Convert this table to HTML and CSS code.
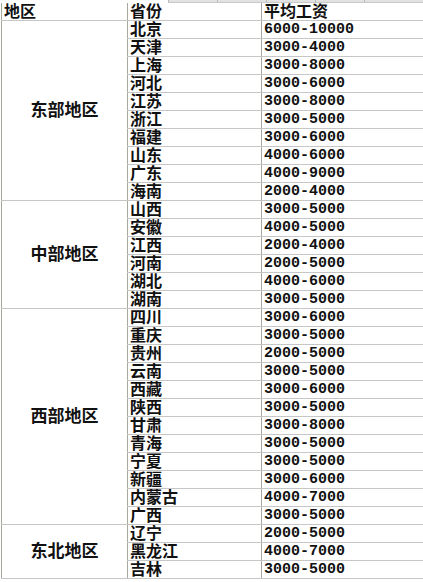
FILE: index.html
```html
<!DOCTYPE html>
<html lang="zh-CN">
<head>
<meta charset="utf-8">
<title>地区平均工资</title>
<link rel="stylesheet" href="styles.css">
</head>
<body>
<div class="sheet">
  <div class="strip"><span></span><span></span><span></span><span></span><span></span></div>
  <table class="grid">
    <colgroup><col class="c1"><col class="c2"><col class="c3"></colgroup>
    <thead>
      <tr><th>地区</th><th>省份</th><th>平均工资</th></tr>
    </thead>
    <tbody>
      <tr><td class="region" rowspan="10">东部地区</td><td>北京</td><td class="num">6000-10000</td></tr>
      <tr><td>天津</td><td class="num">3000-4000</td></tr>
      <tr><td>上海</td><td class="num">3000-8000</td></tr>
      <tr><td>河北</td><td class="num">3000-6000</td></tr>
      <tr><td>江苏</td><td class="num">3000-8000</td></tr>
      <tr><td>浙江</td><td class="num">3000-5000</td></tr>
      <tr><td>福建</td><td class="num">3000-6000</td></tr>
      <tr><td>山东</td><td class="num">4000-6000</td></tr>
      <tr><td>广东</td><td class="num">4000-9000</td></tr>
      <tr><td>海南</td><td class="num">2000-4000</td></tr>
      <tr><td class="region" rowspan="6">中部地区</td><td>山西</td><td class="num">3000-5000</td></tr>
      <tr><td>安徽</td><td class="num">4000-5000</td></tr>
      <tr><td>江西</td><td class="num">2000-4000</td></tr>
      <tr><td>河南</td><td class="num">2000-5000</td></tr>
      <tr><td>湖北</td><td class="num">4000-6000</td></tr>
      <tr><td>湖南</td><td class="num">3000-5000</td></tr>
      <tr><td class="region" rowspan="12">西部地区</td><td>四川</td><td class="num">3000-6000</td></tr>
      <tr><td>重庆</td><td class="num">3000-5000</td></tr>
      <tr><td>贵州</td><td class="num">2000-5000</td></tr>
      <tr><td>云南</td><td class="num">3000-5000</td></tr>
      <tr><td>西藏</td><td class="num">3000-6000</td></tr>
      <tr><td>陕西</td><td class="num">3000-5000</td></tr>
      <tr><td>甘肃</td><td class="num">3000-8000</td></tr>
      <tr><td>青海</td><td class="num">3000-5000</td></tr>
      <tr><td>宁夏</td><td class="num">3000-5000</td></tr>
      <tr><td>新疆</td><td class="num">3000-6000</td></tr>
      <tr><td>内蒙古</td><td class="num">4000-7000</td></tr>
      <tr><td>广西</td><td class="num">3000-5000</td></tr>
      <tr><td class="region" rowspan="3">东北地区</td><td>辽宁</td><td class="num">2000-5000</td></tr>
      <tr><td>黑龙江</td><td class="num">4000-7000</td></tr>
      <tr><td>吉林</td><td class="num">3000-5000</td></tr>
    </tbody>
  </table>
</div>
</body>
</html>
```
FILE: styles.css
```css
html, body {
  margin: 0;
  padding: 0;
  background: #ffffff;
  overflow: hidden;
}
.sheet {
  width: 423px;
  overflow: hidden;
  padding-left: 1px;
}
.strip {
  margin-left: 167px;
  height: 2px;
  background: #e2e2e2;
  border-bottom: 1px solid #c8c8c8;
  display: flex;
}
.strip span {
  width: 0;
  border-left: 1px solid #b8b8b8;
  margin-right: 48px;
}
.grid {
  border-collapse: collapse;
  table-layout: fixed;
  width: 520px;
  font-family: "Liberation Sans", "Noto Sans CJK SC", "Noto Sans CJK TC", sans-serif;
  font-weight: 700;
  font-size: 16px;
  color: #111111;
}
.c1 { width: 126px; }
.c2 { width: 134px; }
.c3 { width: 260px; }
.grid th, .grid td {
  height: 17px;
  padding: 0 0 0 2px;
  line-height: 17px;
  text-align: left;
  vertical-align: bottom;
  border-top: 1px solid #c6c6c6;
  border-bottom: 1px solid #c6c6c6;
  border-left: 1px solid #a8a8a0;
  white-space: nowrap;
}
.grid thead th {
  border-top: none;
  font-weight: 700;
}
.grid tr:first-child th:first-child,
.grid td.region {
  border-left: 1px solid #a3a998;
}
.grid td.region {
  text-align: center;
  vertical-align: middle;
  padding-left: 0;
  font-size: 17px;
}
.grid td.num {
  font-family: "Liberation Mono", "DejaVu Sans Mono", monospace;
  font-size: 15px;
  font-weight: 700;
}
```
